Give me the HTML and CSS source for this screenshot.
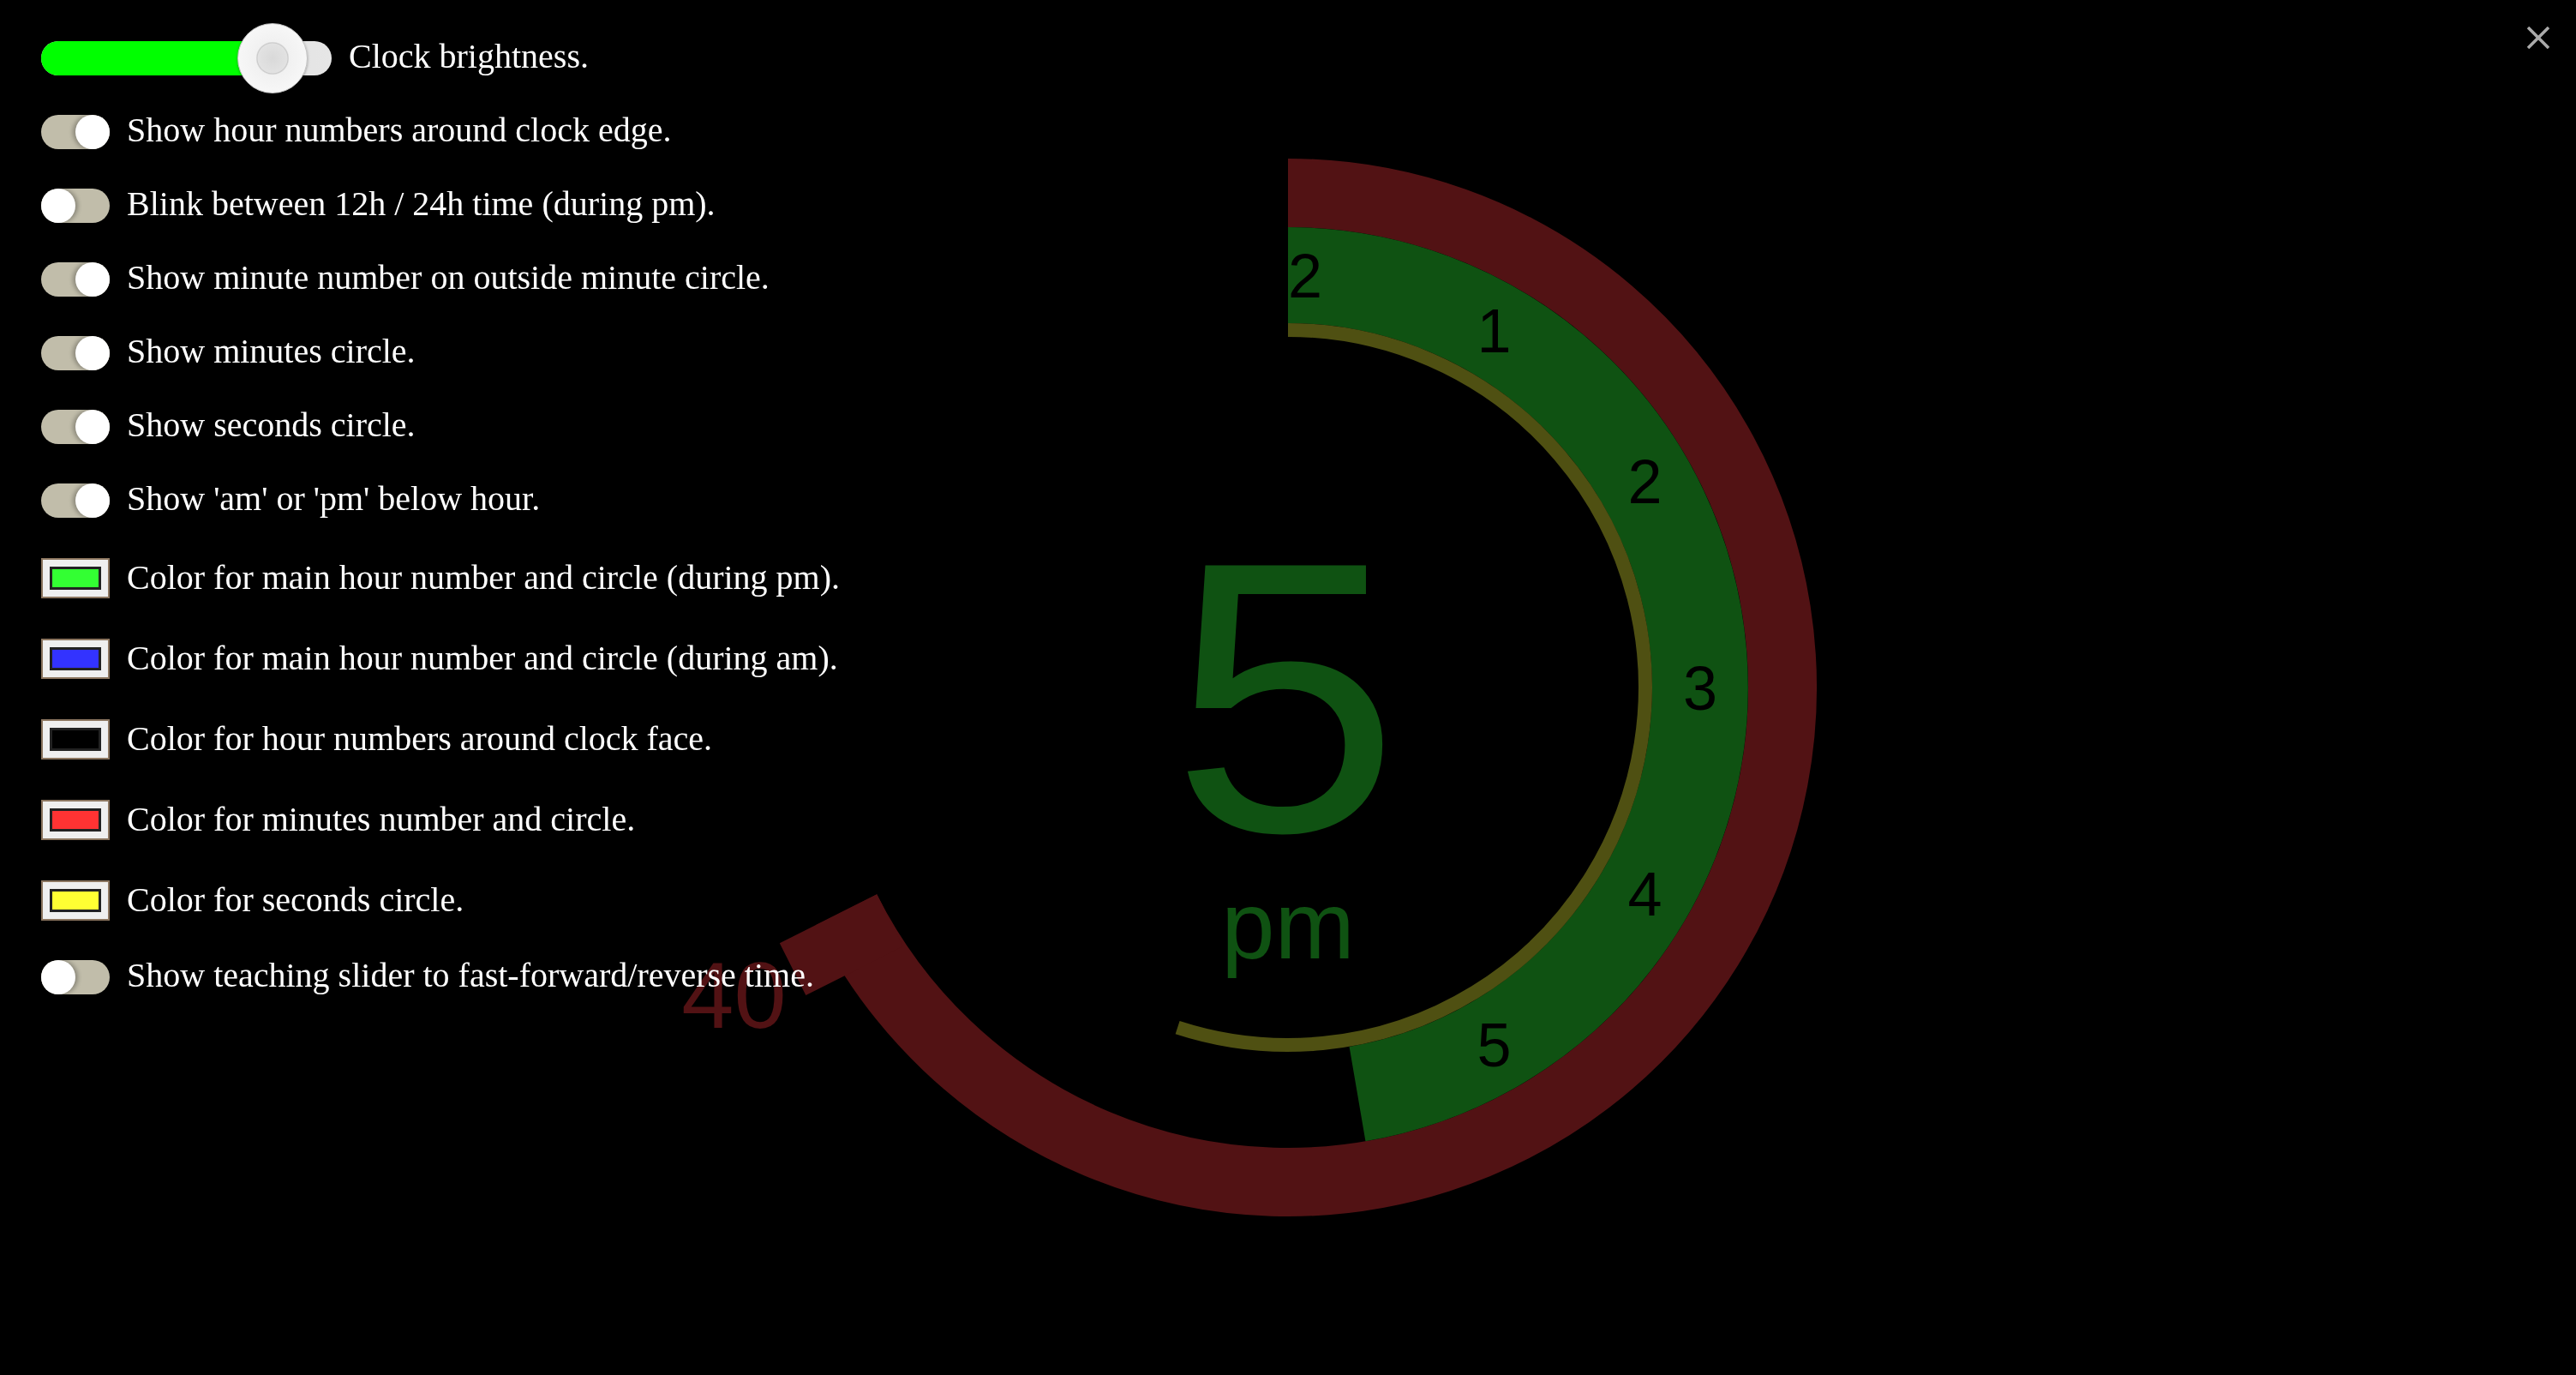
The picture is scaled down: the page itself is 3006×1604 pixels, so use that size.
FILE: index.html
```html
<!DOCTYPE html>
<html lang="en">
<head>
<meta charset="utf-8">
<title>Clock</title>
<link rel="stylesheet" href="styles.css">
</head>
<body>
<svg class="clock" viewBox="0 0 3006 1604" xmlns="http://www.w3.org/2000/svg">
  <path class="arc-min" d="M1503 225 A577 577 0 1 1 987.5 1061.2"/>
  <g transform="translate(1503 802) rotate(243.3)">
    <rect class="min-tab" x="-68" y="-664" width="68" height="127"/>
  </g>
  <path class="arc-hour" d="M1503 321 A481 481 0 0 1 1584 1276.1"/>
  <path class="arc-sec" d="M1503 385 A417 417 0 1 1 1374.1 1198.6"/>
  <g class="hour-nums">
    <text x="1743.5" y="411.2">1</text>
    <text x="1919.6" y="587.3">2</text>
    <text x="1984" y="827.8">3</text>
    <text x="1919.6" y="1068.3">4</text>
    <text x="1743.5" y="1244.4">5</text>
    <text x="1503" y="1308.8">6</text>
    <text x="1262.5" y="1244.4">7</text>
    <text x="1086.4" y="1068.3">8</text>
    <text x="1022" y="827.8">9</text>
    <text x="1086.4" y="587.3">10</text>
    <text x="1262.5" y="411.2">11</text>
    <text x="1503" y="346.8">12</text>
  </g>
  <text class="big-hour" transform="translate(1500 969) scale(1.065 1)" x="0" y="0">5</text>
  <text class="ampm" x="1503" y="1118">pm</text>
  <text class="min-num" x="856.5" y="1199">40</text>
</svg>

<main class="panel">
  <div class="row">
    <div class="slider">
      <div class="slider-fill" style="width:270px"></div>
      <div class="slider-thumb" style="left:229px"></div>
    </div>
    <span class="label">Clock brightness.</span>
  </div>
  <div class="row"><span class="toggle on"><span class="knob"></span></span><span class="label">Show hour numbers around clock edge.</span></div>
  <div class="row"><span class="toggle"><span class="knob"></span></span><span class="label">Blink between 12h / 24h time (during pm).</span></div>
  <div class="row"><span class="toggle on"><span class="knob"></span></span><span class="label">Show minute number on outside minute circle.</span></div>
  <div class="row"><span class="toggle on"><span class="knob"></span></span><span class="label">Show minutes circle.</span></div>
  <div class="row"><span class="toggle on"><span class="knob"></span></span><span class="label">Show seconds circle.</span></div>
  <div class="row"><span class="toggle on"><span class="knob"></span></span><span class="label">Show 'am' or 'pm' below hour.</span></div>
  <div class="row color-row"><span class="swatch-box"><span class="swatch sw-green"></span></span><span class="label">Color for main hour number and circle (during pm).</span></div>
  <div class="row color-row"><span class="swatch-box"><span class="swatch sw-blue"></span></span><span class="label">Color for main hour number and circle (during am).</span></div>
  <div class="row color-row"><span class="swatch-box"><span class="swatch sw-black"></span></span><span class="label">Color for hour numbers around clock face.</span></div>
  <div class="row color-row"><span class="swatch-box"><span class="swatch sw-red"></span></span><span class="label">Color for minutes number and circle.</span></div>
  <div class="row color-row"><span class="swatch-box"><span class="swatch sw-yellow"></span></span><span class="label">Color for seconds circle.</span></div>
  <div class="row"><span class="toggle"><span class="knob"></span></span><span class="label">Show teaching slider to fast-forward/reverse time.</span></div>
</main>

<button class="close" aria-label="Close">
  <svg width="26" height="26" viewBox="0 0 26 26" xmlns="http://www.w3.org/2000/svg">
    <line x1="1" y1="1" x2="25" y2="25"/>
    <line x1="25" y1="1" x2="1" y2="25"/>
  </svg>
</button>
</body>
</html>
```

FILE: styles.css
```css
html, body {
  margin: 0;
  padding: 0;
  background: #000;
  height: 100%;
  overflow: hidden;
}

body {
  font-family: "Liberation Serif", "Times New Roman", serif;
  color: #fff;
}

.clock {
  position: fixed;
  top: 0;
  left: 0;
  width: 100vw;
  height: 100vh;
  z-index: 0;
}

.arc-min {
  fill: none;
  stroke: #521214;
  stroke-width: 80;
}

.min-tab {
  fill: #521214;
}

.arc-hour {
  fill: none;
  stroke: #0f5212;
  stroke-width: 112;
}

.arc-sec {
  fill: none;
  stroke: #4f5012;
  stroke-width: 16;
}

.hour-nums text {
  font-family: "Liberation Sans", Arial, sans-serif;
  font-size: 72px;
  fill: #000;
  text-anchor: middle;
}

.big-hour {
  font-family: "Liberation Sans", Arial, sans-serif;
  font-size: 450px;
  fill: #0f5212;
  text-anchor: middle;
}

.ampm {
  font-family: "Liberation Sans", Arial, sans-serif;
  font-size: 112px;
  fill: #0f5212;
  text-anchor: middle;
}

.min-num {
  font-family: "Liberation Sans", Arial, sans-serif;
  font-size: 110px;
  fill: #521214;
  text-anchor: middle;
}

.panel {
  position: relative;
  z-index: 1;
  padding: 45px 0 0 48px;
  display: flex;
  flex-direction: column;
  align-items: flex-start;
  gap: 40px;
}

.row {
  display: flex;
  align-items: center;
  gap: 20px;
  height: 46px;
}

.row.color-row {
  height: 54px;
}

.label {
  font-size: 40px;
  line-height: 46px;
  margin-bottom: 5px;
  white-space: nowrap;
}

.color-row .label {
  margin-bottom: 0;
}

/* brightness slider */
.slider {
  position: relative;
  width: 339px;
  height: 40px;
  border-radius: 20px;
  background: linear-gradient(90deg, #d6d6d6, #e6e6e6);
}

.slider-fill {
  height: 100%;
  background: #00ff00;
  border-radius: 20px 0 0 20px;
}

.slider-thumb {
  position: absolute;
  top: -21px;
  width: 80px;
  height: 80px;
  border-radius: 50%;
  border: 1px solid #c2c2c2;
  background:
    radial-gradient(circle at 50% 50%, #d9d9d9 0, #e2e2e2 17px, #c9c9c9 18px, #f1f1f1 19.5px, #f7f7f7 40px);
  box-shadow: 0 1px 3px rgba(0, 0, 0, 0.35);
}

/* toggles */
.toggle {
  display: flex;
  justify-content: flex-start;
  width: 80px;
  height: 40px;
  border-radius: 20px;
  background: #c1bdaa;
}

.toggle.on {
  justify-content: flex-end;
}

.knob {
  width: 40px;
  height: 40px;
  border-radius: 50%;
  background: #fff;
  box-shadow: 3px 0 5px rgba(0, 0, 0, 0.28);
}

.toggle.on .knob {
  box-shadow: -3px 0 5px rgba(0, 0, 0, 0.28);
}

/* color inputs */
.swatch-box {
  box-sizing: border-box;
  display: block;
  width: 80px;
  height: 47px;
  border: 2px solid #8c7660;
  background: #efefef;
  padding: 8px;
}

.swatch {
  display: block;
  box-sizing: border-box;
  height: 27px;
  border: 3px solid #222;
}

.sw-green { background: #33ff33; }
.sw-blue { background: #3333ff; }
.sw-black { background: #000; }
.sw-red { background: #ff3333; }
.sw-yellow { background: #ffff33; }

/* close button */
.close {
  position: absolute;
  top: 31px;
  right: 31px;
  z-index: 2;
  width: 26px;
  height: 26px;
  padding: 0;
  border: 0;
  background: none;
}

.close svg {
  display: block;
}

.close line {
  stroke: #aaaaaa;
  stroke-width: 3.5;
}
```
